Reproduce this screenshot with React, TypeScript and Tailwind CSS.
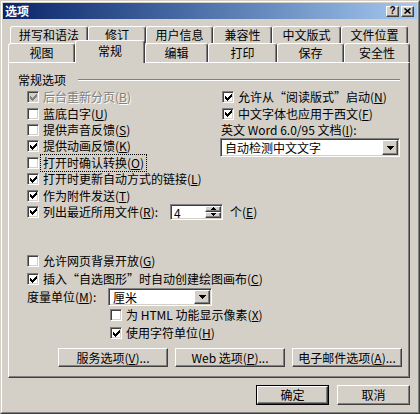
import React from 'react';

const raised =
  'border border-t-white border-l-white border-r-[#404040] border-b-[#404040] shadow-[inset_-1px_-1px_0_#808080] bg-[#d4d0c8]';
const sunken =
  'border border-t-[#808080] border-l-[#808080] border-r-white border-b-white shadow-[inset_1px_1px_0_#404040,inset_-1px_-1px_0_#d4d0c8]';

const checkRuns: [number, number, number][] = [
  [6, 0, 1],
  [5, 1, 2],
  [0, 2, 1],
  [4, 2, 3],
  [0, 3, 2],
  [3, 3, 3],
  [0, 4, 5],
  [1, 5, 3],
  [2, 6, 1],
];

function Box({ checked, disabled }: { checked?: boolean; disabled?: boolean }) {
  return (
    <span
      className={`flex w-[12px] h-[12px] shrink-0 items-center justify-center ${sunken} ${
        disabled ? 'bg-[#d4d0c8]' : 'bg-white'
      }`}
    >
      {checked && (
        <svg width="7" height="7" viewBox="0 0 7 7" shapeRendering="crispEdges">
          {checkRuns.map(([x, y, w], i) => (
            <rect key={i} x={x} y={y} width={w} height={1} fill={disabled ? '#808080' : '#000'} />
          ))}
        </svg>
      )}
    </span>
  );
}

function Label({ text, k, tail = '' }: { text: string; k: string; tail?: string }) {
  return (
    <>
      {text}(<u>{k}</u>){tail}
    </>
  );
}

function Check({
  text,
  k,
  checked,
  disabled,
  focus,
  h = 'h-[16.4px]',
}: {
  text: string;
  k: string;
  checked?: boolean;
  disabled?: boolean;
  focus?: boolean;
  h?: string;
}) {
  return (
    <div className={`flex items-center gap-[4px] ${h}`}>
      <Box checked={checked} disabled={disabled} />
      <span
        className={`leading-[12px] whitespace-nowrap ${
          disabled ? 'text-[#808080] [text-shadow:1px_1px_0_#fff]' : ''
        } ${focus ? 'outline-1 outline-dotted outline-black outline-offset-[2px]' : ''}`}
      >
        <Label text={text} k={k} />
      </span>
    </div>
  );
}

function DownArrow() {
  return (
    <svg width="7" height="4" viewBox="0 0 7 4" shapeRendering="crispEdges">
      <rect x="0" y="0" width="7" height="1" fill="#000" />
      <rect x="1" y="1" width="5" height="1" fill="#000" />
      <rect x="2" y="2" width="3" height="1" fill="#000" />
      <rect x="3" y="3" width="1" height="1" fill="#000" />
    </svg>
  );
}

function Combo({ value, w, h }: { value: string; w: string; h: string }) {
  return (
    <div className={`flex shrink-0 bg-white ${sunken} ${w} ${h} p-[1px]`}>
      <span className="flex-1 pl-[3px] leading-[15px] whitespace-nowrap">{value}</span>
      <span className={`flex w-[16px] items-center justify-center ${raised}`}>
        <DownArrow />
      </span>
    </div>
  );
}

function SmallTri({ up }: { up?: boolean }) {
  return (
    <svg width="5" height="3" viewBox="0 0 5 3" shapeRendering="crispEdges">
      {up ? (
        <>
          <rect x="2" y="0" width="1" height="1" fill="#000" />
          <rect x="1" y="1" width="3" height="1" fill="#000" />
          <rect x="0" y="2" width="5" height="1" fill="#000" />
        </>
      ) : (
        <>
          <rect x="0" y="0" width="5" height="1" fill="#000" />
          <rect x="1" y="1" width="3" height="1" fill="#000" />
          <rect x="2" y="2" width="1" height="1" fill="#000" />
        </>
      )}
    </svg>
  );
}

function Tab({ label, w, h = 'h-[17px]' }: { label: string; w: string; h?: string }) {
  return (
    <div
      className={`flex ${w} ${h} items-center justify-center rounded-t-[3px] border-t border-l border-r border-t-white border-l-white border-r-[#404040] shadow-[inset_-1px_0_0_#808080] bg-[#d4d0c8] leading-[14px]`}
    >
      {label}
    </div>
  );
}

function Btn({ children, w, h, def }: { children: React.ReactNode; w: string; h: string; def?: boolean }) {
  if (def) {
    return (
      <div className={`flex ${w} ${h} border border-black`}>
        <div className={`flex flex-1 items-center justify-center ${raised}`}>{children}</div>
      </div>
    );
  }
  return <div className={`flex ${w} ${h} items-center justify-center whitespace-nowrap ${raised}`}>{children}</div>;
}

export default function App() {
  return (
    <div className="w-[420px] h-[414px] bg-[#d4d0c8] text-[12px] text-black font-['Noto_Sans_CJK_SC','Liberation_Sans',sans-serif] border border-t-[#d4d0c8] border-l-[#d4d0c8] border-r-[#404040] border-b-[#404040] overflow-hidden">
      <div className="h-full border border-t-white border-l-white border-r-[#808080] border-b-[#808080] p-[1px]">
        {/* Title bar */}
        <div className="flex h-[16px] items-center bg-gradient-to-r from-[#0a246a] to-[#a6caf0] pl-[2px] pr-[3px]">
          <span className="flex-1 text-white font-bold leading-[14px]">选项</span>
          <div className="flex gap-[2px]">
            <span className={`flex w-[13px] h-[11px] items-center justify-center text-[10px] font-bold leading-[10px] font-['Liberation_Sans',sans-serif] ${raised}`}>
              ?
            </span>
            <span className={`flex w-[13px] h-[11px] items-center justify-center ${raised}`}>
              <svg width="7" height="6" viewBox="0 0 7 6">
                <path d="M0.5 0.5 L6.5 5.5 M6.5 0.5 L0.5 5.5" stroke="#000" strokeWidth="1.6" />
              </svg>
            </span>
          </div>
        </div>

        <div className="pl-[5px] pt-[7px]">
          {/* Tabs */}
          <div className="flex ml-[2px]">
            <Tab label="拼写和语法" w="w-[78px]" />
            <Tab label="修订" w="w-[58px]" />
            <Tab label="用户信息" w="w-[67px]" />
            <Tab label="兼容性" w="w-[59px]" />
            <Tab label="中文版式" w="w-[69px]" />
            <Tab label="文件位置" w="w-[67px]" />
          </div>
          <div className="flex items-end h-[19px]">
            <Tab label="视图" w="w-[67px]" h="h-[19px]" />
            <div className="relative z-10 -mb-[1px]">
              <Tab label="常规" w="w-[70px]" h="h-[23px] pb-[3px]" />
            </div>
            <Tab label="编辑" w="w-[63px]" h="h-[19px]" />
            <Tab label="打印" w="w-[69px]" h="h-[19px]" />
            <Tab label="保存" w="w-[67px]" h="h-[19px]" />
            <Tab label="安全性" w="w-[66px]" h="h-[19px]" />
          </div>

          {/* Panel */}
          <div className="flex flex-col w-[402px] h-[316px] border border-t-white border-l-white border-r-[#404040] border-b-[#404040] shadow-[inset_-1px_-1px_0_#808080]">
            <div className="flex h-4 items-center mt-[9px] px-[9px]">
              <span className="leading-[14px]">常规选项</span>
              <div className="flex-1 ml-[12px] h-[2px] border-t border-t-[#808080] border-b border-b-white" />
            </div>

            <div className="flex mt-[1px]">
              <div className="flex flex-col w-[193px] shrink-0 ml-[18px]">
                <Check text="后台重新分页" k="B" checked disabled />
                <Check text="蓝底白字" k="U" />
                <Check text="提供声音反馈" k="S" />
                <Check text="提供动画反馈" k="K" checked />
                <Check text="打开时确认转换" k="O" focus />
                <Check text="打开时更新自动方式的链接" k="L" checked />
                <Check text="作为附件发送" k="T" checked />
                <div className="flex items-center h-[16.4px]">
                  <Box checked />
                  <span className="w-[131px] shrink-0 pl-[4px] leading-[12px] whitespace-nowrap">
                    <Label text="列出最近所用文件" k="R" tail=":" />
                  </span>
                  <div className={`flex shrink-0 w-[53px] h-[16px] bg-white p-[1px] ${sunken}`}>
                    <span className="flex-1 pl-[2px] leading-[13px]">4</span>
                    <div className="flex flex-col w-[16px]">
                      <span className={`flex flex-1 items-center justify-center ${raised}`}>
                        <SmallTri up />
                      </span>
                      <span className={`flex flex-1 items-center justify-center ${raised}`}>
                        <SmallTri />
                      </span>
                    </div>
                  </div>
                  <span className="shrink-0 ml-[7px] leading-[12px] whitespace-nowrap">
                    个(<u>E</u>)
                  </span>
                </div>
              </div>

              <div className="flex flex-col w-[180px] shrink-0">
                <div className="pl-[2px]">
                  <Check text="允许从“阅读版式”启动" k="N" checked />
                  <Check text="中文字体也应用于西文" k="F" checked />
                </div>
                <div className="flex items-center h-[16.4px] pl-[1px] leading-[12px] whitespace-nowrap">
                  <Label text="英文 Word 6.0/95 文档" k="I" tail=":" />
                </div>
                <Combo value="自动检测中文文字" w="w-[180px]" h="h-[19px]" />
              </div>
            </div>

            <div className="flex flex-col mt-[33px] pl-[18px]">
              <Check text="允许网页背景开放" k="G" h="h-[16px]" />
              <div className="mt-[2px]">
                <Check text="插入“自选图形”时自动创建绘图画布" k="C" checked h="h-[16px]" />
              </div>
              <div className="flex items-center h-[18px] mt-[1px]">
                <span className="w-[81px] shrink-0 leading-[12px] whitespace-nowrap">
                  <Label text="度量单位" k="M" tail=":" />
                </span>
                <Combo value="厘米" w="w-[104px]" h="h-[18px]" />
              </div>
              <div className="flex flex-col pl-[83px]">
                <Check text="为 HTML 功能显示像素" k="X" h="h-[18px]" />
                <Check text="使用字符单位" k="H" checked h="h-[18px]" />
              </div>
            </div>

            <div className="flex justify-end gap-[7px] pr-[7px] mt-[6px]">
              <Btn w="w-[110px]" h="h-[19px]">
                <Label text="服务选项" k="V" tail="..." />
              </Btn>
              <Btn w="w-[110px]" h="h-[19px]">
                <Label text="Web 选项" k="P" tail="..." />
              </Btn>
              <Btn w="w-[110px]" h="h-[19px]">
                <Label text="电子邮件选项" k="A" tail="..." />
              </Btn>
            </div>
          </div>

          {/* Dialog buttons */}
          <div className="flex justify-end gap-[8px] w-[402px] mt-[7px]">
            <Btn w="w-[73px]" h="h-[20px]" def>
              确定
            </Btn>
            <Btn w="w-[73px]" h="h-[20px]">
              取消
            </Btn>
          </div>
        </div>
      </div>
    </div>
  );
}
